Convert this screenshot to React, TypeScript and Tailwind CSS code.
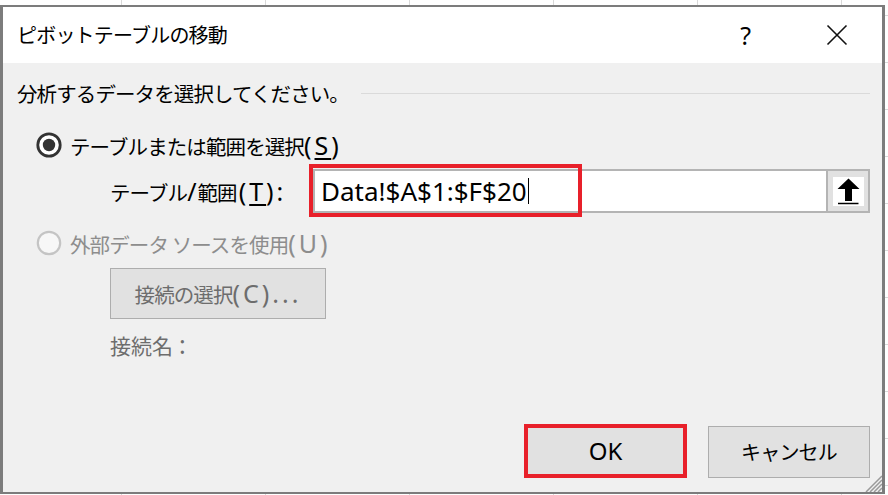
import React from 'react';

// Latin runs are drawn larger than the Japanese ones, as Windows does with linked fonts
function L({ children, className = '' }: { children: React.ReactNode; className?: string }) {
  return <span className={`font-['Noto_Sans',sans-serif] text-[25px] ${className}`}>{children}</span>;
}

function Radio({ checked, disabled }: { checked?: boolean; disabled?: boolean }) {
  return (
    <svg width="26" height="26" viewBox="0 0 26 26" className="shrink-0">
      <circle cx="13" cy="13" r="11.2" fill={disabled ? '#f7f7f7' : '#ffffff'} stroke={disabled ? '#c4c4c4' : '#333333'} strokeWidth={disabled ? 2.2 : 2.8} />
      {checked && <circle cx="13" cy="13" r="6.2" fill="#333333" />}
    </svg>
  );
}

export default function App() {
  return (
    <div className="w-[888px] h-[495px] bg-white pt-[5px] pr-[3px] pb-[1px] overflow-hidden font-['Noto_Sans_CJK_JP',sans-serif] [background-image:linear-gradient(to_right,#d9d9d9_1px,transparent_1px),linear-gradient(to_bottom,#d9d9d9_1px,transparent_1px)] [background-size:144px_47px] [background-position:121px_15px]">
      <div className="relative flex flex-col h-full border-[#7c7c7c] border-l-[3px] border-t-2 border-r-[3px] border-b-[2px] bg-[#f0f0f0] text-black">
        {/* Title bar */}
        <div className="h-[56px] bg-white flex items-center pl-[14px] shrink-0">
          <span className="text-[20px] tracking-[-0.8px] leading-none">ピボットテーブルの移動</span>
          <span className="ml-auto mr-[75px] font-['Noto_Sans',sans-serif] text-[25px] leading-none">?</span>
          <svg width="22" height="22" viewBox="0 0 22 22" className="mr-[34px]">
            <path d="M1.5 1.5 L20.5 20.5 M20.5 1.5 L1.5 20.5" stroke="#111" strokeWidth="1.6" fill="none" />
          </svg>
        </div>

        {/* Body */}
        <div className="flex flex-col flex-1 pl-[14px] pr-[12px] pb-[14px]">
          <div className="mt-[15px] h-[30px] flex items-center">
            <span className="text-[20.5px] tracking-[-0.9px] leading-none">分析するデータを選択してください。</span>
            <div className="flex-1 h-px bg-[#dadada] ml-[12px]" />
          </div>

          <div className="mt-[22px] h-[30px] flex items-center pl-[19px]">
            <Radio checked />
            <span className="ml-[8px] text-[20.5px] tracking-[-0.9px] leading-none whitespace-nowrap">
              テーブルまたは範囲を選択<L className="tracking-[3px]">(<span className="underline underline-offset-[3px]">S</span>)</L>
            </span>
          </div>

          <div className="mt-[9px] h-[44px] flex items-center">
            <span className="ml-[93px] w-[204px] text-[20.5px] tracking-[-0.9px] leading-none whitespace-nowrap">
              テーブル<L className="tracking-[1px]">/</L>範囲<L className="ml-[2px] tracking-[3px]">(<span className="underline underline-offset-[3px]">T</span>):</L>
            </span>
            <div className="relative flex h-[44px]">
              <div className="w-[513px] h-[44px] bg-white border-2 border-r-0 border-[#b4b4b4] flex items-center pl-[6px]">
                <span className="font-['Noto_Sans',sans-serif] text-[26px] leading-none">Data!$A$1:$F$20</span>
                <span className="ml-[1px] w-px h-[26px] bg-black" />
              </div>
              <div className="w-[44px] h-[44px] bg-[#e1e1e1] border-2 border-[#b4b4b4] flex items-center justify-center">
                <svg width="31" height="29" viewBox="0 0 31 29">
                  <rect width="31" height="29" fill="#fff" />
                  <path d="M15.5 1.5 L26.5 12 L19 12 L19 24 L12 24 L12 12 L4.5 12 Z" fill="#000" />
                  <path d="M5 26.5 L25.5 26.5" stroke="#000" strokeWidth="1.5" />
                </svg>
              </div>
              {/* highlight annotation */}
              <div className="absolute -left-[4px] -top-[5px] w-[273px] h-[53px] border-[4px] border-[#e8202a]" />
            </div>
          </div>

          <div className="mt-[15px] h-[30px] flex items-center pl-[19px]">
            <Radio disabled />
            <span className="ml-[8px] text-[20.5px] tracking-[-0.9px] leading-none text-[#8d8d8d] whitespace-nowrap">
              外部データ ソースを使用<L className="tracking-[3px]">(U)</L>
            </span>
          </div>

          <div className="mt-[10px] ml-[93px] w-[216px] h-[51px] bg-[#e1e1e1] border border-[#adadad] flex items-center justify-center text-[#6d6d6d]">
            <span className="text-[20.5px] tracking-[-0.9px] leading-none whitespace-nowrap">
              接続の選択<L className="tracking-[3px]">(C)...</L>
            </span>
          </div>

          <div className="mt-[13px] ml-[93px] h-[24px] flex items-center text-[#6d6d6d]">
            <span className="text-[21px] leading-none">接続名<L className="ml-[6px]">:</L></span>
          </div>

          <div className="mt-auto flex items-end justify-end gap-[21px]">
            <div className="w-[163px] h-[54px] bg-[#e1e1e1] border-[4px] border-[#e8202a] flex items-center justify-center">
              <span className="font-['Noto_Sans',sans-serif] text-[24px] leading-none">OK</span>
            </div>
            <div className="w-[162px] h-[52px] bg-[#e1e1e1] border border-[#adadad] flex items-center justify-center">
              <span className="text-[20px] tracking-[-0.8px] leading-none">キャンセル</span>
            </div>
          </div>
        </div>

        {/* resize grip */}
        <svg width="18" height="18" viewBox="0 0 18 18" className="absolute right-0 bottom-0">
          <path d="M18 2 L2 18 M18 6 L6 18 M18 10 L10 18 M18 14 L14 18" stroke="#9a9a9a" strokeWidth="1.5" />
        </svg>
      </div>
    </div>
  );
}
